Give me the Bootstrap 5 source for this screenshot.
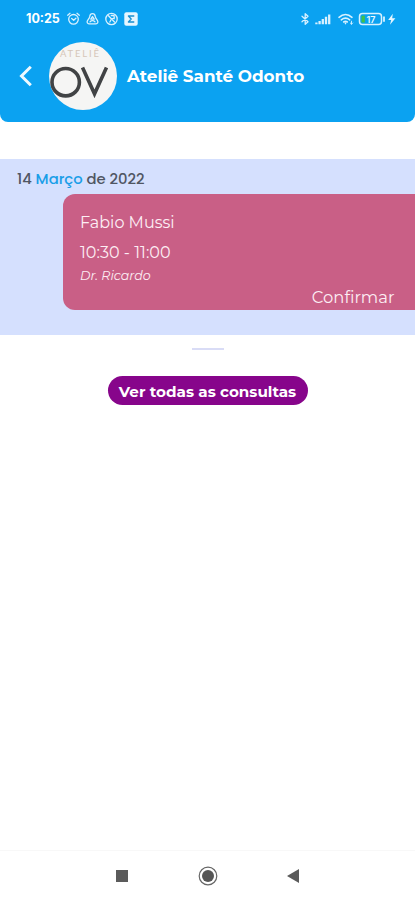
<!DOCTYPE html>
<html lang="pt-BR">
<head>
<meta charset="utf-8">
<meta name="viewport" content="width=device-width, initial-scale=1">
<title>Ateliê Santé Odonto</title>
<link href="https://cdn.jsdelivr.net/npm/bootstrap@5.3.0/dist/css/bootstrap.min.css" rel="stylesheet">
<style>
body{font-family:Montserrat,Inter,sans-serif;height:900px;overflow:hidden;background:#fff}
.app-head{height:122px;background:#0ba2f1;border-radius:0 0 8px 8px}
.status{height:38px;padding:0 18px 0 26px}
.clock{font:700 12.5px/38px Inter,sans-serif;width:34px;margin-right:7px;white-space:nowrap}
.title-row{height:76px;padding-left:19px}
.back-btn{width:30px;line-height:0}
.logo{width:68px;height:68px;margin-right:10px}
.brand{font-size:16.8px;font-weight:700;line-height:20px}
.day{margin-top:37px;height:176px;background:#d5e0fe;padding-top:10px}
.day-date{font-family:Poppins,Montserrat,sans-serif;font-size:14.8px;line-height:20px;font-weight:500;color:#505663;padding-left:17px}
.month{color:#1a9ee8}
.visit{margin:5px 0 0 63px;height:116px;background:#c95f86;border-radius:12px 0 0 12px;padding:17px 20.5px 0 17px;color:#fdeef4}
.who{font-size:16px;line-height:24px}
.hours{font-size:16px;line-height:24px;margin-top:6px;letter-spacing:.05px}
.doctor{font-size:12.6px;line-height:20px;font-style:italic;margin-top:1px}
.confirm{font-size:16.4px;line-height:24px;margin-top:-1px}
.divider{width:32px;height:2px;background:#d9dcf6;margin-top:13px}
.all-btn{margin-top:26px;width:200px;height:29px;background:#87058b;font-size:15.2px;font-weight:700;line-height:31px;white-space:nowrap}
.sys-nav{height:50px;border-top:1px solid #f8f8f8;gap:69px}
</style>
<script src="https://cdn.jsdelivr.net/npm/bootstrap@5.3.0/dist/js/bootstrap.bundle.min.js"></script>
</head>
<body class="d-flex flex-column">
<header class="app-head text-white">
  <div class="status d-flex align-items-center">
    <span class="clock">10:25</span>
    <svg width="72" height="16" viewBox="0 0 72 16" fill="none" stroke="#d9f1ff" stroke-width="1.3" stroke-linecap="round" stroke-linejoin="round">
      <circle cx="6.5" cy="8.3" r="4.8"/><path d="M.7 4.2 3 2.3M12.3 4.2 10 2.3M4.7 7.5l2 1.7 2.2-2"/>
      <path transform="translate(2.5 0)" d="M23 2.7c-1.8 0-2.5 1.1-2.7 2.5l-.5 1.6-1.8 2.8c-.9 1.5-.1 3.2 1.5 3.2h7c1.6 0 2.4-1.7 1.5-3.2l-1.8-2.8-.5-1.6c-.2-1.4-.9-2.5-2.7-2.5zM20.5 10.8c1.3-1.6 3.7-1.6 5 0M23 5.5l-1.7 2.7h3.4z"/>
      <circle cx="44.5" cy="8" r="5.7"/><path d="M41.5 4.7l3 3.3 3-1.2M44.5 8l-1.7 3M44.3 4.5h2.8v3.3M47.5 11l-2-2"/>
      <rect x="57.3" y="1.3" width="13.4" height="13.4" rx="2" fill="#e6f6ff" stroke="none"/><path d="M66.8 5h-5.4l2.8 3-2.8 3h5.4" stroke="#188fcf"/>
    </svg>
    <svg class="ms-auto" width="97" height="16" viewBox="0 0 97 16" fill="none" stroke="#d9f1ff" stroke-width="1.3" stroke-linecap="round" stroke-linejoin="round">
      <path d="M2 5.3 8 10.7 5.2 13.3V2.7L8 5.3 2 10.7"/>
      <path d="M16.4 13.2v-1.8M19.6 13.2v-3.2M22.8 13.2V8M26 13.2V5.8M29.2 13.2V3.4" stroke-width="2.3" stroke-linecap="butt"/>
      <path d="M39 6.3c4-3.6 9-3.6 13 0M41.3 8.8c2.8-2.2 5.6-2.2 8.4 0M43.7 11c1.2-.9 2.4-.9 3.6 0M45.5 12.4v.2" stroke-width="1.6"/><path d="M51.5 10.2v3M50.3 12l1.2 1.2 1.2-1.2" stroke-width=".9"/>
      <rect x="59.5" y="2.6" width="22" height="11" rx="3" stroke-width="1.5"/><path d="M84 6.2v3.8" stroke-width="1.8"/>
      <path d="M61.5 4.7h3.3v6.8h-3.3z" fill="#42c247" stroke="none"/>
      <text x="66.5" y="11.5" fill="#eefaff" stroke="none" font-family="Inter,sans-serif" font-size="9" font-weight="600">17</text>
      <path d="M92.8 2.7 88.2 8.9h3l-1.2 4.9 5.4-6.5h-3.2z" fill="#e6f6ff" stroke="none"/>
    </svg>
  </div>
  <div class="title-row d-flex align-items-center">
    <a href="#" class="back-btn" aria-label="Voltar"><svg width="14" height="22" viewBox="0 0 14 22" fill="none" stroke="#eef9ff" stroke-width="3"><path d="M11.8 1.8 2.5 11l9.3 9.2"/></svg></a>
    <svg class="logo" viewBox="0 0 68 68">
      <circle cx="34" cy="34" r="34" fill="#f5f5f4"/>
      <text x="11" y="15" font-family="Lato,sans-serif" font-size="9.5" fill="#d5c6b9" textLength="39" lengthAdjust="spacing">ATELIÊ</text>
      <circle cx="16.7" cy="40.2" r="13.7" fill="none" stroke="#414345" stroke-width="3.6"/>
      <path d="M33.5 25.5 45.5 51.8 57.5 25.5" fill="none" stroke="#414345" stroke-width="3.6"/>
    </svg>
    <h1 class="brand mb-0">Ateliê Santé Odonto</h1>
  </div>
</header>
<main class="flex-grow-1">
  <section class="day">
    <div class="day-date">14 <span class="month">Março</span> de 2022</div>
    <div class="visit d-flex flex-column">
      <div class="who">Fabio Mussi</div>
      <div class="hours">10:30 - 11:00</div>
      <div class="doctor">Dr. Ricardo</div>
      <div class="confirm text-end">Confirmar</div>
    </div>
  </section>
  <div class="divider mx-auto"></div>
  <button type="button" class="all-btn btn rounded-pill border-0 p-0 d-block mx-auto text-white">Ver todas as consultas</button>
</main>
<nav class="sys-nav d-flex justify-content-center align-items-center" aria-label="Sistema">
  <svg width="13" height="12" viewBox="0 0 13 12"><path d="M0 0h12v12H0z" fill="#5b5b5b"/></svg>
  <svg width="20" height="20" viewBox="0 0 20 20"><circle cx="10" cy="10" r="8.8" fill="none" stroke="#666" stroke-width="1.2"/><circle cx="10" cy="10" r="6" fill="#565656"/></svg>
  <svg width="13" height="14" viewBox="0 0 13 14"><path d="M12 0v14L0 7z" fill="#5b5b5b"/></svg>
</nav>
</body>
</html>
